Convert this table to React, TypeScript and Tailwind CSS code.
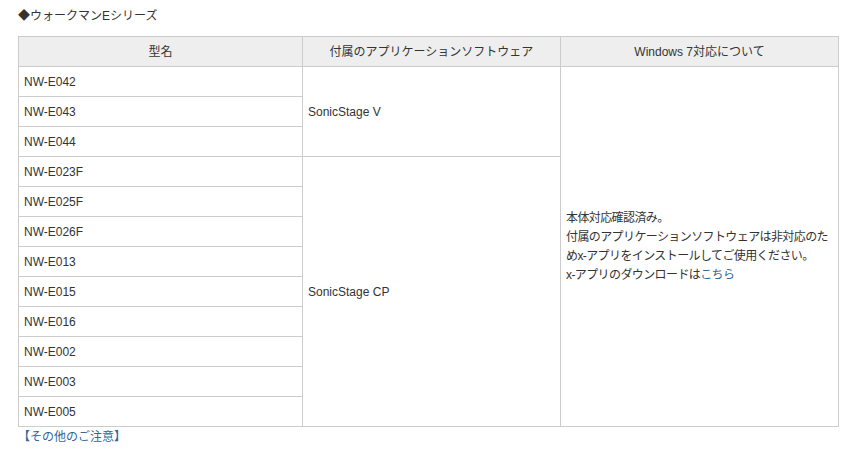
import React from "react";

const models1 = ["NW-E042", "NW-E043", "NW-E044"];
const models2 = [
  "NW-E023F",
  "NW-E025F",
  "NW-E026F",
  "NW-E013",
  "NW-E015",
  "NW-E016",
  "NW-E002",
  "NW-E003",
  "NW-E005",
];

const font = {
  fontFamily: '"Liberation Sans", "Noto Sans CJK JP", sans-serif',
};

export default function App() {
  const td = "border border-[#cccccc] h-[30px] px-[5px] align-middle";
  return (
    <div className="bg-white w-[856px] h-[456px] text-[12px] text-[#333333]" style={font}>
      <div className="px-[18px] pt-[6px]">
        <div className="h-[20px] leading-[20px] mb-[10px]">◆ウォークマンEシリーズ</div>
        <table className="border-collapse w-[820px] table-fixed">
          <colgroup>
            <col className="w-[284px]" />
            <col className="w-[258px]" />
            <col className="w-[278px]" />
          </colgroup>
          <thead>
            <tr className="bg-[#eeeeee]">
              <th className={`${td} font-normal text-center`}>型名</th>
              <th className={`${td} font-normal text-center`}>付属のアプリケーションソフトウェア</th>
              <th className={`${td} font-normal text-center`}>Windows 7対応について</th>
            </tr>
          </thead>
          <tbody>
            {models1.map((m, i) => (
              <tr key={m}>
                <td className={td}>{m}</td>
                {i === 0 && (
                  <td className={td} rowSpan={3}>
                    SonicStage V
                  </td>
                )}
                {i === 0 && (
                  <td className={`${td} leading-[19px] tracking-[-0.6px]`} rowSpan={12}>
                    本体対応確認済み。
                    <br />
                    付属のアプリケーションソフトウェアは非対応のた
                    <br />
                    めx-アプリをインストールしてご使用ください。
                    <br />
                    x-アプリのダウンロードは
                    <span className="text-[#336699]">こちら</span>
                  </td>
                )}
              </tr>
            ))}
            {models2.map((m, i) => (
              <tr key={m}>
                <td className={td}>{m}</td>
                {i === 0 && (
                  <td className={td} rowSpan={9}>
                    SonicStage CP
                  </td>
                )}
              </tr>
            ))}
          </tbody>
        </table>
        <div className="text-[#336699] leading-[20px]">【その他のご注意】</div>
      </div>
    </div>
  );
}
